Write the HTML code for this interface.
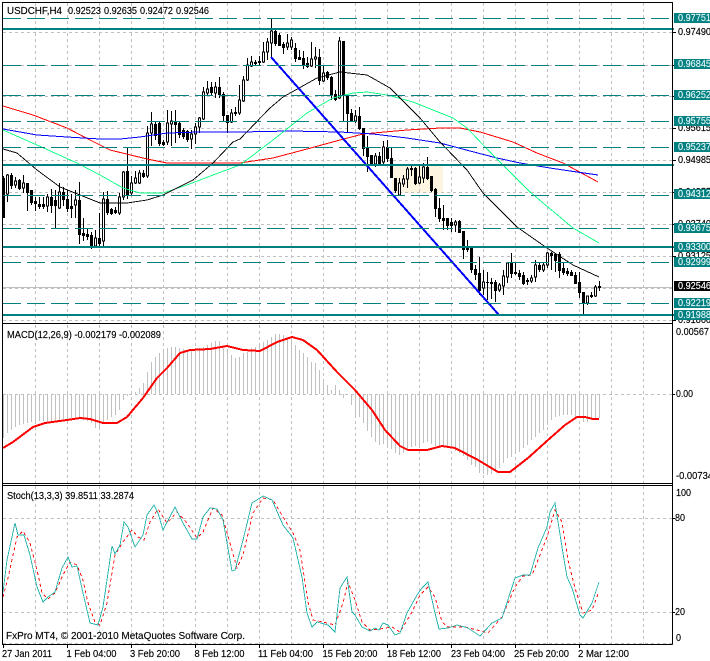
<!DOCTYPE html>
<html><head><meta charset="utf-8"><title>USDCHF,H4</title>
<style>html,body{margin:0;padding:0;background:#fff}svg{display:block}text{font-family:"Liberation Sans",sans-serif;font-size:10.5px;fill:#000;stroke:#000;stroke-width:.15px}g.b text{stroke:#e4f6f6}</style>
</head><body>
<svg width="710" height="661" viewBox="0 0 710 661" xmlns="http://www.w3.org/2000/svg">
<rect width="710" height="661" fill="#fff"/>
<!-- highlight -->
<rect x="392" y="165" width="51" height="28" fill="#fdf5e0"/>
<g shape-rendering="crispEdges" fill="none">
<!-- grid -->
<path stroke="#c0c0c0" stroke-dasharray="3 3" d="M3 32.5H672M3 65.5H672M3 96.5H672M3 128.5H672M3 160.5H672M3 192.5H672M3 224.5H672M3 256.5H672M3 288.5H672M3 320.5H672M3 394.5H672M3 518.5H672M3 612.5H672M3 643.5H672"/>
<path stroke="#c0c0c0" d="M3 287.5H672"/>
<path stroke="#c0c0c0" stroke-dasharray="3 3" d="M35.5 3V323M67.5 3V323M99.5 3V323M131.5 3V323M163.5 3V323M195.5 3V323M227.5 3V323M259.5 3V323M291.5 3V323M323.5 3V323M355.5 3V323M387.5 3V323M419.5 3V323M451.5 3V323M483.5 3V323M515.5 3V323M547.5 3V323M579.5 3V323M611.5 3V323M643.5 3V323"/>
<path stroke="#c0c0c0" stroke-dasharray="3 3" d="M35.5 325V483M67.5 325V483M99.5 325V483M131.5 325V483M163.5 325V483M195.5 325V483M227.5 325V483M259.5 325V483M291.5 325V483M323.5 325V483M355.5 325V483M387.5 325V483M419.5 325V483M451.5 325V483M483.5 325V483M515.5 325V483M547.5 325V483M579.5 325V483M611.5 325V483M643.5 325V483"/>
<path stroke="#c0c0c0" stroke-dasharray="3 3" d="M35.5 486V644M67.5 486V644M99.5 486V644M131.5 486V644M163.5 486V644M195.5 486V644M227.5 486V644M259.5 486V644M291.5 486V644M323.5 486V644M355.5 486V644M387.5 486V644M419.5 486V644M451.5 486V644M483.5 486V644M515.5 486V644M547.5 486V644M579.5 486V644M611.5 486V644M643.5 486V644"/>
<!-- wicks -->
<path stroke="#000" d="M3.5 176V218M7.5 174V202M11.5 173V189M15.5 177V188M19.5 179V190M23.5 175V193M27.5 183V211M31.5 190V205M35.5 197V211M39.5 197V209M43.5 197V209M47.5 194V212M51.5 189V213M55.5 190V228M59.5 183V209M63.5 187V206M67.5 190V212M71.5 194V218M75.5 190V218M79.5 182V244M83.5 218V241M87.5 229V240M91.5 232V249M95.5 230V247M99.5 213V247M103.5 192V248M107.5 191V215M111.5 208V215M115.5 207V214M119.5 193V215M123.5 171V200M127.5 147V199M131.5 176V195M135.5 171V184M139.5 170V184M143.5 170V178M147.5 126V178M151.5 112V146M155.5 121V140M159.5 122V146M163.5 140V146M167.5 110V145M171.5 111V146M175.5 110V143M179.5 122V138M183.5 128V139M187.5 130V142M191.5 130V149M195.5 123V144M199.5 117V133M203.5 87V120M207.5 81V96M211.5 82V96M215.5 82V98M219.5 77V98M223.5 92V121M227.5 115V133M231.5 109V123M235.5 107V116M239.5 85V115M243.5 76V102M247.5 58V81M251.5 56V67M255.5 60V66M259.5 56V66M263.5 42V63M267.5 38V60M271.5 18V57M275.5 28V46M279.5 33V46M283.5 42V54M287.5 34V50M291.5 37V50M295.5 43V62M299.5 50V60M303.5 51V69M307.5 57V68M311.5 42V67M315.5 47V68M319.5 49V85M323.5 65V82M327.5 71V80M331.5 76V100M335.5 90V101M339.5 37V99M343.5 41V121M347.5 95V133M351.5 109V122M355.5 110V123M359.5 107V130M363.5 128V156M367.5 136V172M371.5 155V165M375.5 153V167M379.5 152V164M383.5 141V164M387.5 140V162M391.5 148V178M395.5 178V193M399.5 178V196M403.5 175V187M407.5 167V188M411.5 166V176M415.5 167V185M419.5 165V184M423.5 163V183M427.5 157V180M431.5 176V192M435.5 188V217M439.5 198V222M443.5 205V230M447.5 218V230M451.5 218V232M455.5 220V232M459.5 220V233M463.5 232V259M467.5 240V252M471.5 246V273M475.5 265V280M479.5 257V295M483.5 270V295M487.5 272V300M491.5 278V299M495.5 280V302M499.5 283V292M503.5 270V295M507.5 262V283M511.5 253V278M515.5 262V275M519.5 270V280M523.5 272V285M527.5 278V285M531.5 275V283M535.5 260V282M539.5 262V272M543.5 263V272M547.5 252V268M551.5 252V270M555.5 253V272M559.5 252V278M563.5 262V275M567.5 268V276M571.5 270V276M575.5 272V284M579.5 272V298M583.5 292V315M587.5 296V305M591.5 292V298M595.5 285V297M599.5 281V291"/>
<!-- black bodies -->
<path stroke="#000" stroke-width="3" d="M3.5 178V218M11.5 175V186M19.5 180V189M27.5 183V193M31.5 190V203M35.5 201V204M39.5 204V207M43.5 204V207M51.5 197V206M55.5 200V206M63.5 192V200M67.5 199V209M71.5 206V209M79.5 200V235M83.5 233V236M87.5 234V237M91.5 235V246M99.5 238V244M107.5 199V213M111.5 209V214M115.5 210V213M127.5 171V195M143.5 173V177M155.5 124V136M159.5 123V144M163.5 142V145M175.5 121V125M179.5 123V135M183.5 130V137M187.5 131V140M211.5 87V93M219.5 87V95M223.5 94V116M227.5 115V123M235.5 112V114M255.5 62V64M259.5 61V63M275.5 31V44M279.5 35V46M283.5 44V48M295.5 48V59M299.5 57V60M303.5 58V65M307.5 63V67M319.5 57V81M327.5 72V78M331.5 77V96M335.5 94V100M343.5 41V96M347.5 95V114M351.5 113V121M359.5 116V129M363.5 128V149M367.5 148V157M371.5 155V164M379.5 156V164M387.5 147V159M391.5 158V178M395.5 178V191M411.5 168V170M415.5 168V184M427.5 167V179M431.5 176V191M435.5 189V209M439.5 208V219M443.5 218V221M447.5 218V226M451.5 222V226M459.5 221V233M463.5 231V250M467.5 247V250M471.5 246V270M475.5 269V275M479.5 273V291M487.5 282V283M491.5 282V284M495.5 282V291M511.5 263V274M515.5 272V274M519.5 273V277M523.5 275V284M527.5 280V282M539.5 265V270M551.5 253V256M555.5 254V261M559.5 254V271M563.5 268V273M567.5 271V274M571.5 272V276M575.5 275V284M579.5 282V293M583.5 292V304M591.5 295V297M599.5 286V288"/>
<!-- white bodies -->
<path stroke="#000" fill="#fff" d="M6.5 175V194H8.5V175zM14.5 181V185H16.5V181zM22.5 183V188H24.5V183zM46.5 197V206H48.5V197zM58.5 192V208H60.5V192zM74.5 200V205H76.5V200zM94.5 238V246H96.5V238zM102.5 199V241H104.5V199zM118.5 197V213H120.5V197zM122.5 172V197H124.5V172zM130.5 183V193H132.5V183zM134.5 178V183H136.5V178zM138.5 173V183H140.5V173zM146.5 133V176H148.5V133zM150.5 124V133H152.5V124zM166.5 123V142H168.5V123zM170.5 121V124H172.5V121zM190.5 134V139H192.5V134zM194.5 127V134H196.5V127zM198.5 118V127H200.5V118zM202.5 92V119H204.5V92zM206.5 89V93H208.5V89zM214.5 87V93H216.5V87zM230.5 113V122H232.5V113zM238.5 100V113H240.5V100zM242.5 80V101H244.5V80zM246.5 65V80H248.5V65zM250.5 62V66H252.5V62zM262.5 52V62H264.5V52zM266.5 42V52H268.5V42zM270.5 31V43H272.5V31zM286.5 43V47H288.5V43zM290.5 40V47H292.5V40zM310.5 59V66H312.5V59zM314.5 57V59H316.5V57zM322.5 73V81H324.5V73zM338.5 41V98H340.5V41zM354.5 116V121H356.5V116zM374.5 156V164H376.5V156zM382.5 147V162H384.5V147zM398.5 183V195H400.5V183zM402.5 179V184H404.5V179zM406.5 169V179H408.5V169zM418.5 177V183H420.5V177zM422.5 167V178H424.5V167zM454.5 222V225H456.5V222zM482.5 282V288H484.5V282zM498.5 285V290H500.5V285zM502.5 276V286H504.5V276zM506.5 263V277H508.5V263zM530.5 278V281H532.5V278zM534.5 265V277H536.5V265zM542.5 265V270H544.5V265zM546.5 253V265H548.5V253zM586.5 296V303H588.5V296zM594.5 287V296H596.5V287z"/>
<!-- moving averages -->
<polyline stroke="#ff0000" points="3,106 33,115 67,128 90,140 110,150 147,159 167,163 187,163 240,163 273,158 307,149 340,140 363,134 407,130 440,128 460,128 480,132 490,135 513,142 537,153 563,163 598,182"/>
<polyline stroke="#0000ff" points="3,129 20,132 37,135 67,137 100,139 120,139 140,137 167,133 200,132 240,132 290,131 340,132 373,134 407,138 440,143 470,151 497,158 520,163 550,168 570,171 598,175"/>
<polyline stroke="#00ff7f" stroke-width=".9" points="3,130 37,145 77,163 100,175 123,188 140,193 163,193 187,185 213,175 240,165 273,140 307,113 333,98 353,93 367,92 387,95 413,102 453,118 467,128 488,150 530,192 573,228 599,243"/>
<polyline stroke="#000" stroke-width=".9" points="3,149 17,153 37,170 60,187 80,195 100,203 127,203 147,200 163,195 193,180 213,163 233,142 240,139 270,108 283,97 317,78 340,72 367,75 390,88 420,118 440,142 467,170 483,193 517,227 547,248 573,265 599,277"/>
<!-- trend line -->
<path stroke="#0000ff" stroke-width="2" d="M271 57L499 315"/>
<!-- teal levels -->
<path stroke="#008080" stroke-dasharray="18 6" d="M3 18.5H672M3 65.5H672M3 95.5H672M3 121.5H672M3 147.5H672M3 195.5H672M3 228.5H672M3 262.5H672M3 303.5H672"/>
<path stroke="#008080" stroke-width="2" d="M3 29H674M3 165H674M3 247H674M3 315H674"/>
<!-- MACD histogram -->
<path stroke="#c0c0c0" d="M3.5 394V438M7.5 394V433M11.5 394V430M15.5 394V427M19.5 394V425M23.5 394V424M27.5 394V423M31.5 394V422M35.5 394V421M39.5 394V421M43.5 394V421M47.5 394V421M51.5 394V421M55.5 394V420M59.5 394V420M63.5 394V419M67.5 394V419M71.5 394V418M75.5 394V417M79.5 394V417M83.5 394V418M87.5 394V421M91.5 394V423M95.5 394V428M99.5 394V430M103.5 394V422M107.5 394V420M111.5 394V417M115.5 394V415M119.5 394V410M123.5 394V400M127.5 394V396M131.5 394V393M135.5 394V392M139.5 394V388M143.5 394V383M147.5 394V372M151.5 394V362M155.5 394V357M159.5 394V353M163.5 394V350M167.5 394V348M171.5 394V347M175.5 394V347M179.5 394V348M183.5 394V349M187.5 394V350M191.5 394V350M195.5 394V348M199.5 394V348M203.5 394V347M207.5 394V345M211.5 394V343M215.5 394V341M219.5 394V341M223.5 394V348M227.5 394V352M231.5 394V355M235.5 394V358M239.5 394V357M243.5 394V353M247.5 394V352M251.5 394V348M255.5 394V347M259.5 394V345M263.5 394V342M267.5 394V340M271.5 394V337M275.5 394V334M279.5 394V334M283.5 394V335M287.5 394V337M291.5 394V340M295.5 394V345M299.5 394V350M303.5 394V353M307.5 394V357M311.5 394V362M315.5 394V363M319.5 394V370M323.5 394V379M327.5 394V385M331.5 394V390M335.5 394V385M339.5 394V390M343.5 394V398M347.5 394V395M351.5 394V405M355.5 394V415M359.5 394V417M363.5 394V423M367.5 394V431M371.5 394V437M375.5 394V442M379.5 394V445M383.5 394V444M387.5 394V448M391.5 394V449M395.5 394V453M399.5 394V455M403.5 394V453M407.5 394V450M411.5 394V447M415.5 394V446M419.5 394V446M423.5 394V443M427.5 394V442M431.5 394V444M435.5 394V446M439.5 394V447M443.5 394V446M447.5 394V447M451.5 394V448M455.5 394V451M459.5 394V453M463.5 394V456M467.5 394V460M471.5 394V465M475.5 394V467M479.5 394V473M483.5 394V474M487.5 394V475M491.5 394V474M495.5 394V470M499.5 394V468M503.5 394V463M507.5 394V458M511.5 394V457M515.5 394V454M519.5 394V452M523.5 394V448M527.5 394V445M531.5 394V440M535.5 394V437M539.5 394V433M543.5 394V430M547.5 394V425M551.5 394V420M555.5 394V417M559.5 394V416M563.5 394V415M567.5 394V415M571.5 394V415M575.5 394V417M579.5 394V418M583.5 394V422M587.5 394V422M591.5 394V420M595.5 394V418M599.5 394V418"/>
<!-- MACD signal -->
<polyline stroke="#ff0000" stroke-width="2" points="3,448 13,442 33,427 45,423 67,420 80,418 90,419 103,423 117,423 127,417 143,398 157,378 167,368 180,353 190,350 210,349 227,346 243,350 260,351 277,342 292,337 303,340 317,350 337,372 355,390 372,410 385,430 400,446 408,450 427,450 442,446 455,448 478,460 498,472 510,472 528,458 548,440 565,425 577,417 585,417 593,419 599,419"/>
<!-- Stochastic -->
<polyline stroke="#ff0000" stroke-width=".9" stroke-dasharray="3 3" points="3,597 8,578 17,537 23,531 30,543 37,570 42,593 48,599 55,593 62,577 70,562 77,565 83,580 88,603 95,622 100,625 107,603 115,555 123,542 132,530 138,537 144,540 150,522 158,509 167,523 177,512 187,523 197,538 203,532 213,508 222,515 230,543 237,568 243,555 253,513 263,498 273,500 283,517 293,533 300,550 308,602 313,620 323,622 335,625 343,603 348,582 355,600 362,622 370,630 380,629 392,627 400,632 412,612 420,595 428,587 435,597 442,622 448,627 465,627 477,630 488,633 502,617 515,587 523,576 532,575 540,555 547,537 555,510 562,522 568,560 575,588 583,613 592,610 598,594"/>
<polyline stroke="#20b2aa" stroke-width=".9" points="3,592 7,560 15,523 18,535 24,535 30,555 37,587 43,602 48,597 55,592 62,568 68,557 72,567 77,566 83,593 90,623 98,625 103,607 112,546 115,554 120,545 124,522 128,527 135,547 143,535 147,515 154,505 158,513 163,530 175,507 183,523 192,539 197,539 203,517 210,508 217,509 223,520 232,571 235,570 243,540 252,503 263,496 272,500 283,525 293,538 302,577 307,613 312,627 317,622 328,625 335,632 340,588 347,577 352,612 355,615 362,627 370,631 375,628 379,630 383,623 388,625 395,635 400,633 407,613 417,595 422,588 428,582 435,613 439,629 448,628 457,625 468,628 480,636 492,623 502,618 515,578 523,575 530,575 538,548 547,527 550,512 555,503 562,547 567,577 572,588 580,615 583,618 592,603 599,582"/>
<!-- frame -->
<path stroke="#000" d="M2 2.5H672.5M2.5 2V644.5M672.5 2V644.5M2 323.5H672.5M2 483.5H672.5M2 485.5H672.5M2 644.5H672.5"/>
<!-- ticks -->
<path stroke="#000" d="M673 32.5h3M673 65.5h3M673 96.5h3M673 128.5h3M673 160.5h3M673 192.5h3M673 224.5h3M673 256.5h3M673 320.5h3M673 394.5h2M673 518.5h2M673 612.5h2M3.5 645v3M67.5 645v3M131.5 645v3M195.5 645v3M259.5 645v3M323.5 645v3M387.5 645v3M451.5 645v3M515.5 645v3M579.5 645v3"/>
</g>
<!-- titles -->
<text x="7" y="14" textLength="55" lengthAdjust="spacingAndGlyphs">USDCHF,H4</text>
<text x="68" y="14" textLength="33" lengthAdjust="spacingAndGlyphs">0.92523</text>
<text x="104" y="14" textLength="33" lengthAdjust="spacingAndGlyphs">0.92635</text>
<text x="140" y="14" textLength="33" lengthAdjust="spacingAndGlyphs">0.92472</text>
<text x="176" y="14" textLength="33" lengthAdjust="spacingAndGlyphs">0.92546</text>
<text x="7" y="338" textLength="154" lengthAdjust="spacingAndGlyphs">MACD(12,26,9) -0.002179 -0.002089</text>
<text x="7" y="499" textLength="127" lengthAdjust="spacingAndGlyphs">Stoch(13,3,3) 39.8511 33.2874</text>
<text x="6" y="639" textLength="239" lengthAdjust="spacingAndGlyphs">FxPro MT4, © 2001-2010 MetaQuotes Software Corp.</text>
<!-- right axis plain labels -->
<g>
<text x="678" y="35" textLength="33" lengthAdjust="spacingAndGlyphs">0.97490</text>
<text x="678" y="131" textLength="33" lengthAdjust="spacingAndGlyphs">0.95615</text>
<text x="678" y="163" textLength="33" lengthAdjust="spacingAndGlyphs">0.94985</text>
<text x="678" y="195" textLength="33" lengthAdjust="spacingAndGlyphs">0.94355</text>
<text x="678" y="227" textLength="33" lengthAdjust="spacingAndGlyphs">0.93740</text>
<text x="678" y="259" textLength="33" lengthAdjust="spacingAndGlyphs">0.93125</text>
<text x="678" y="323" textLength="33" lengthAdjust="spacingAndGlyphs">0.91860</text>
<text x="676" y="335" textLength="33" lengthAdjust="spacingAndGlyphs">0.00567</text>
<text x="676" y="397" textLength="17" lengthAdjust="spacingAndGlyphs">0.00</text>
<text x="676" y="479" textLength="37" lengthAdjust="spacingAndGlyphs">-0.00734</text>
<text x="676" y="496" textLength="15" lengthAdjust="spacingAndGlyphs">100</text>
<text x="675" y="521" textLength="10" lengthAdjust="spacingAndGlyphs">80</text>
<text x="675" y="615" textLength="10" lengthAdjust="spacingAndGlyphs">20</text>
<text x="676" y="641" textLength="5" lengthAdjust="spacingAndGlyphs">0</text>
</g>
<!-- boxes -->
<g fill="#008080" shape-rendering="crispEdges">
<rect x="674" y="13" width="36" height="10"/><rect x="674" y="59" width="36" height="10"/><rect x="674" y="90" width="36" height="10"/><rect x="674" y="116" width="36" height="10"/><rect x="674" y="142" width="36" height="10"/><rect x="674" y="189" width="36" height="10"/><rect x="674" y="223" width="36" height="10"/><rect x="674" y="242" width="36" height="10"/><rect x="674" y="257" width="36" height="10"/><rect x="674" y="298" width="36" height="10"/><rect x="674" y="310" width="36" height="10"/>
<rect x="674" y="281" width="36" height="10" fill="#000"/>
</g>
<g class="b">
<text style="fill:#e4f6f6" x="678" y="21" textLength="33" lengthAdjust="spacingAndGlyphs">0.97751</text>
<text style="fill:#e4f6f6" x="678" y="67" textLength="33" lengthAdjust="spacingAndGlyphs">0.96845</text>
<text style="fill:#e4f6f6" x="678" y="98" textLength="33" lengthAdjust="spacingAndGlyphs">0.96252</text>
<text style="fill:#e4f6f6" x="678" y="124" textLength="33" lengthAdjust="spacingAndGlyphs">0.95755</text>
<text style="fill:#e4f6f6" x="678" y="150" textLength="33" lengthAdjust="spacingAndGlyphs">0.95237</text>
<text style="fill:#e4f6f6" x="678" y="197" textLength="33" lengthAdjust="spacingAndGlyphs">0.94312</text>
<text style="fill:#e4f6f6" x="678" y="231" textLength="33" lengthAdjust="spacingAndGlyphs">0.93675</text>
<text style="fill:#e4f6f6" x="678" y="250" textLength="33" lengthAdjust="spacingAndGlyphs">0.93300</text>
<text style="fill:#e4f6f6" x="678" y="265" textLength="33" lengthAdjust="spacingAndGlyphs">0.92999</text>
<text style="fill:#fff;stroke:#fff" x="678" y="289" textLength="33" lengthAdjust="spacingAndGlyphs">0.92546</text>
<text style="fill:#e4f6f6" x="678" y="306" textLength="33" lengthAdjust="spacingAndGlyphs">0.92219</text>
<text style="fill:#e4f6f6" x="678" y="318" textLength="33" lengthAdjust="spacingAndGlyphs">0.91988</text>
</g>
<!-- time axis -->
<text x="2" y="657" textLength="50" lengthAdjust="spacingAndGlyphs">27 Jan 2011</text>
<text x="66.5" y="657" textLength="50" lengthAdjust="spacingAndGlyphs">1 Feb 04:00</text>
<text x="130" y="657" textLength="50" lengthAdjust="spacingAndGlyphs">3 Feb 20:00</text>
<text x="194.5" y="657" textLength="50" lengthAdjust="spacingAndGlyphs">8 Feb 12:00</text>
<text x="258" y="657" textLength="55" lengthAdjust="spacingAndGlyphs">11 Feb 04:00</text>
<text x="322.5" y="657" textLength="55" lengthAdjust="spacingAndGlyphs">15 Feb 20:00</text>
<text x="387" y="657" textLength="54" lengthAdjust="spacingAndGlyphs">18 Feb 12:00</text>
<text x="451" y="657" textLength="54" lengthAdjust="spacingAndGlyphs">23 Feb 04:00</text>
<text x="514" y="657" textLength="55" lengthAdjust="spacingAndGlyphs">25 Feb 20:00</text>
<text x="578" y="657" textLength="51" lengthAdjust="spacingAndGlyphs">2 Mar 12:00</text>
</svg>
</body></html>
